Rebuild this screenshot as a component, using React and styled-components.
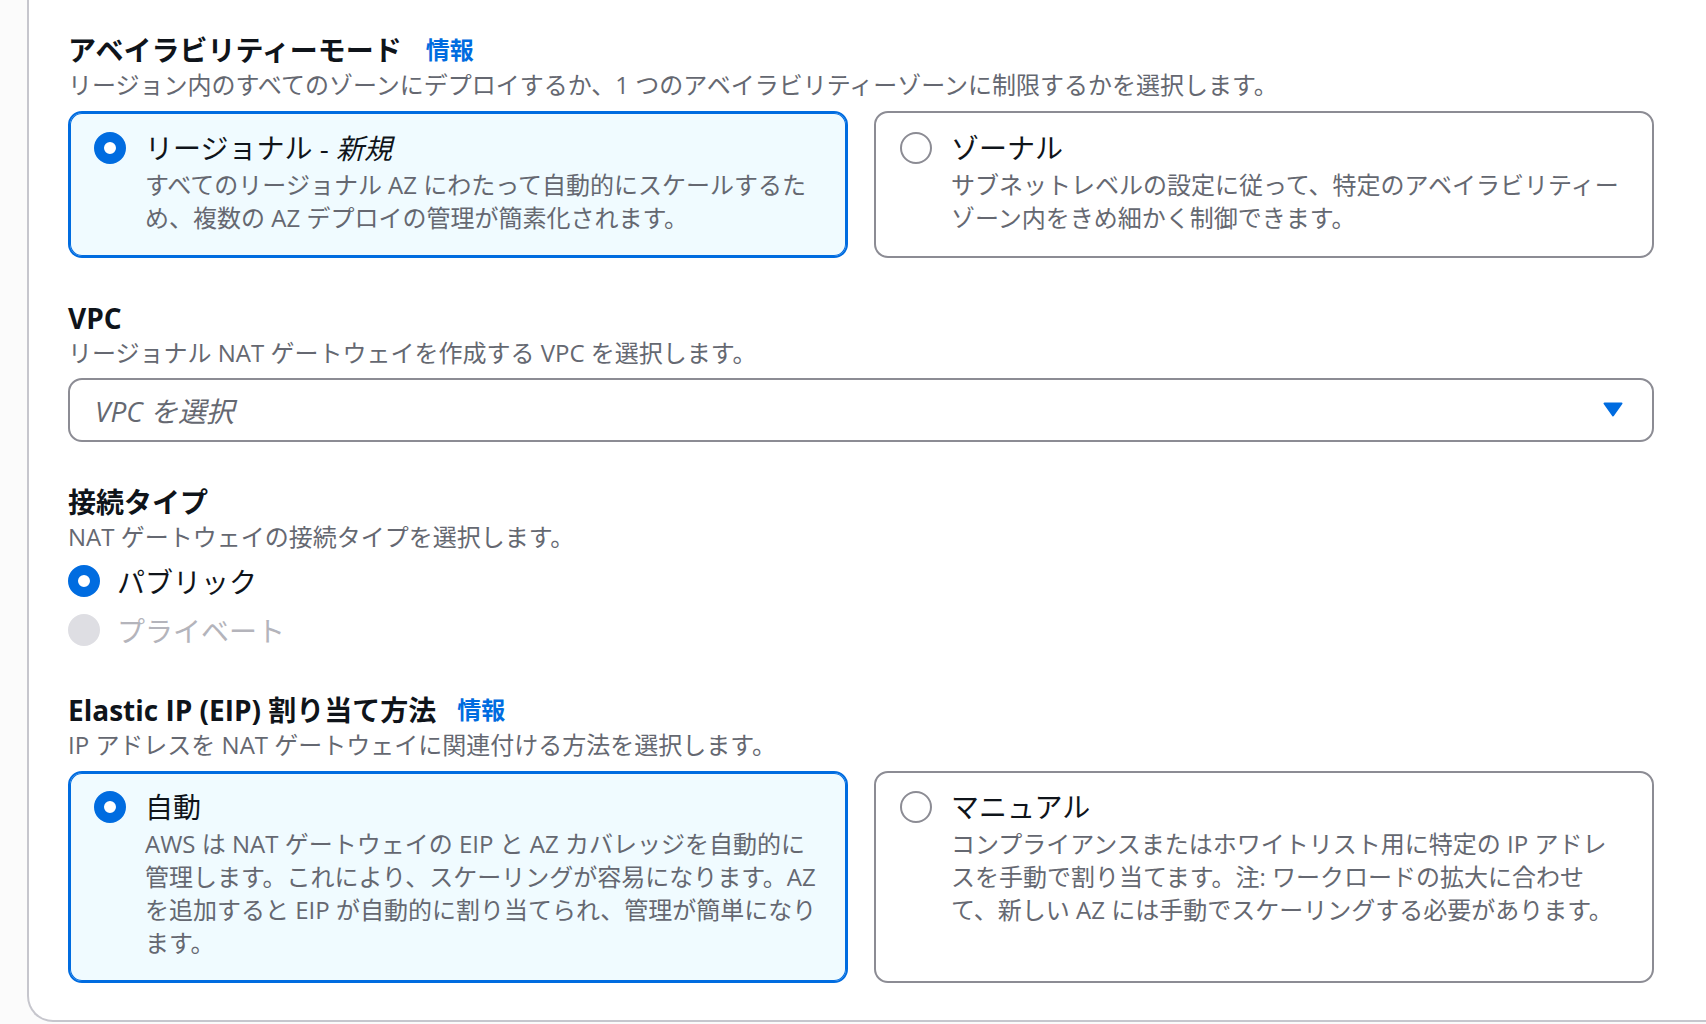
import React from "react";
import styled, { createGlobalStyle } from "styled-components";

const GlobalStyle = createGlobalStyle`
  html, body {
    margin: 0;
    padding: 0;
  }
  body {
    background: #fbfbfb;
    font-family: "Open Sans", "Noto Sans CJK JP", sans-serif;
    color: #0f141a;
    height: 1024px;
    overflow: hidden;
  }
`;

const Page = styled.div`
  padding-left: 27px;
  height: 1024px;
`;

const Panel = styled.div`
  width: 1760px;
  background: #ffffff;
  border-left: 2px solid #c6c6cd;
  border-bottom: 2px solid #c6c6cd;
  border-bottom-left-radius: 26px;
  padding: 32px 0 37px 39px;
`;

const Form = styled.div`
  width: 1586px;
  display: flex;
  flex-direction: column;
`;

const Section = styled.section`
  display: flex;
  flex-direction: column;
  & + & {
    margin-top: 42px;
  }
`;

const HeaderRow = styled.div`
  display: flex;
  align-items: center;
  gap: ${(p) => p.$gap || 24}px;
  height: 36px;
`;

const Heading = styled.h2`
  margin: 0;
  font-size: 28px;
  line-height: 36px;
  font-weight: 700;
  color: #0f141a;
`;

const InfoLink = styled.a`
  font-size: 24px;
  line-height: 36px;
  font-weight: 700;
  color: #006ce0;
  text-decoration: none;
  cursor: pointer;
`;

const Description = styled.p`
  margin: 1px 0 0;
  font-size: 24px;
  line-height: 32px;
  color: #656871;
`;

const TileGrid = styled.div`
  margin-top: 10px;
  display: grid;
  grid-template-columns: 1fr 1fr;
  gap: 26px;
`;

const Tile = styled.div`
  display: flex;
  gap: 19px;
  padding: 16.5px 22px 22px 24px;
  border: 2px solid ${(p) => (p.$selected ? "#006ce0" : "#8c8c94")};
  border-radius: 14px;
  background: ${(p) => (p.$selected ? "#f0fbff" : "#ffffff")};
  box-shadow: ${(p) => (p.$selected ? "inset 0 0 0 1px #006ce0" : "none")};
  cursor: pointer;
`;

const RadioSlot = styled.div`
  height: 36px;
  display: flex;
  align-items: center;
  flex: none;
`;

const RadioDot = styled.span`
  box-sizing: border-box;
  display: block;
  width: 32px;
  height: 32px;
  border-radius: 50%;
  flex: none;
  background: ${(p) => (p.$disabled ? "#dedee3" : "#ffffff")};
  border: ${(p) =>
    p.$checked
      ? "10.5px solid #006ce0"
      : p.$disabled
      ? "2px solid #dedee3"
      : "2px solid #8c8c94"};
`;

const TileText = styled.div`
  display: flex;
  flex-direction: column;
  flex: 1;
  min-width: 0;
`;

const TileTitle = styled.div`
  font-size: 28px;
  line-height: 36px;
  color: #0f141a;
  em {
    font-style: italic;
  }
`;

const TileDesc = styled.div`
  margin-top: 2px;
  font-size: 24px;
  line-height: 33px;
  color: #656871;
`;

const Select = styled.div`
  box-sizing: border-box;
  margin-top: 9px;
  height: 64px;
  border: 2px solid #8c8c94;
  border-radius: 14px;
  background: #ffffff;
  display: flex;
  align-items: center;
  justify-content: space-between;
  padding: 0 29px 0 25px;
  cursor: pointer;
`;

const Placeholder = styled.span`
  font-size: 28px;
  font-style: italic;
  color: #656871;
`;

const RadioList = styled.div`
  margin-top: 8.5px;
  display: flex;
  flex-direction: column;
  gap: 8.5px;
`;

const RadioRow = styled.label`
  display: flex;
  align-items: center;
  gap: 17px;
  height: 40px;
  font-size: 28px;
  color: ${(p) => (p.$disabled ? "#b4b4bb" : "#0f141a")};
  cursor: ${(p) => (p.$disabled ? "default" : "pointer")};
`;

const Caret = () => (
  <svg width="20" height="15" viewBox="0 0 20 15">
    <path
      d="M1.5 1.5 H18.5 L10 13.5 Z"
      fill="#006ce0"
      stroke="#006ce0"
      strokeWidth="2"
      strokeLinejoin="round"
    />
  </svg>
);

const TileOption = ({ selected, title, children }) => (
  <Tile $selected={selected}>
    <RadioSlot>
      <RadioDot $checked={selected} />
    </RadioSlot>
    <TileText>
      <TileTitle>{title}</TileTitle>
      <TileDesc>{children}</TileDesc>
    </TileText>
  </Tile>
);

export default function App() {
  return (
    <Page>
      <GlobalStyle />
      <Panel>
        <Form>
          <Section>
            <HeaderRow $gap={24}>
              <Heading>アベイラビリティーモード</Heading>
              <InfoLink>情報</InfoLink>
            </HeaderRow>
            <Description>
              リージョン内のすべてのゾーンにデプロイするか、1 つのアベイラビリティーゾーンに制限するかを選択します。
            </Description>
            <TileGrid>
              <TileOption
                selected
                title={
                  <>
                    リージョナル - <em>新規</em>
                  </>
                }
              >
                すべてのリージョナル AZ にわたって自動的にスケールするため、複数の AZ デプロイの管理が簡素化されます。
              </TileOption>
              <TileOption title="ゾーナル">
                サブネットレベルの設定に従って、特定のアベイラビリティーゾーン内をきめ細かく制御できます。
              </TileOption>
            </TileGrid>
          </Section>

          <Section>
            <HeaderRow>
              <Heading>VPC</Heading>
            </HeaderRow>
            <Description>
              リージョナル NAT ゲートウェイを作成する VPC を選択します。
            </Description>
            <Select>
              <Placeholder>VPC を選択</Placeholder>
              <Caret />
            </Select>
          </Section>

          <Section>
            <HeaderRow>
              <Heading>接続タイプ</Heading>
            </HeaderRow>
            <Description>NAT ゲートウェイの接続タイプを選択します。</Description>
            <RadioList>
              <RadioRow>
                <RadioDot $checked />
                パブリック
              </RadioRow>
              <RadioRow $disabled>
                <RadioDot $disabled />
                プライベート
              </RadioRow>
            </RadioList>
          </Section>

          <Section>
            <HeaderRow $gap={21}>
              <Heading>Elastic IP (EIP) 割り当て方法</Heading>
              <InfoLink>情報</InfoLink>
            </HeaderRow>
            <Description>
              IP アドレスを NAT ゲートウェイに関連付ける方法を選択します。
            </Description>
            <TileGrid>
              <TileOption selected title="自動">
                AWS は NAT ゲートウェイの EIP と AZ カバレッジを自動的に管理します。これにより、スケーリングが容易になります。AZ を追加すると EIP が自動的に割り当てられ、管理が簡単になります。
              </TileOption>
              <TileOption title="マニュアル">
                コンプライアンスまたはホワイトリスト用に特定の IP アドレスを手動で割り当てます。注: ワークロードの拡大に合わせて、新しい AZ には手動でスケーリングする必要があります。
              </TileOption>
            </TileGrid>
          </Section>
        </Form>
      </Panel>
    </Page>
  );
}
